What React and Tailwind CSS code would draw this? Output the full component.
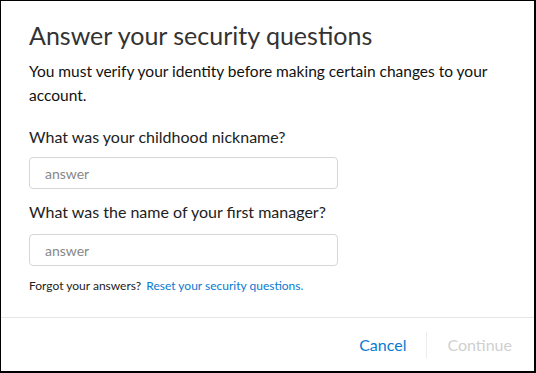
export default function App() {
  return (
    <div className="w-[536px] h-[373px] bg-white border-t border-l border-r-2 border-b-2 border-black flex flex-col font-['Lato',sans-serif] overflow-hidden">
      {/* Body */}
      <div className="flex-1 px-[28px] pt-[18px]">
        <h1 className="text-[25px] leading-[32px] text-[#333]">Answer your security questions</h1>
        <p className="mt-[8px] text-[15.5px] leading-[24px] text-[#111] -mr-[10px]">
          You must verify your identity before making certain changes to your account.
        </p>

        <label className="block mt-[18px] text-[16px] leading-[24px] text-[#222]">What was your childhood nickname?</label>
        <div className="mt-[8px] w-[309px] h-[32px] rounded-[4px] border border-[#d6d6d6] px-[15px] flex items-center text-[14px] text-[#888]">
          answer
        </div>

        <label className="block mt-[11px] text-[16px] leading-[24px] text-[#222]">What was the name of your first manager?</label>
        <div className="mt-[10px] w-[309px] h-[32px] rounded-[4px] border border-[#d6d6d6] px-[15px] flex items-center text-[14px] text-[#888]">
          answer
        </div>

        <p className="mt-[12px] text-[12px] leading-[16px] text-[#222]">
          Forgot your answers? <span className="text-[#0a7ad1] ml-[2px]">Reset your security questions.</span>
        </p>
      </div>

      {/* Footer */}
      <div className="h-[54px] border-t border-[#e6e6e6] flex items-center justify-end pr-[22px]">
        <span className="text-[16px] text-[#0a7ad1]">Cancel</span>
        <div className="w-px h-[26px] bg-[#ececec] mx-[20px]"></div>
        <span className="text-[16px] text-[#d0d0d0]">Continue</span>
      </div>
    </div>
  );
}
